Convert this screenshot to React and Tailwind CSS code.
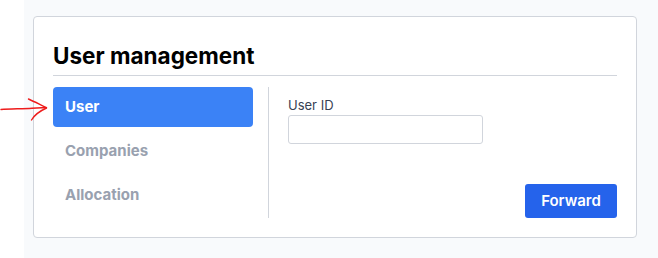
import { useState } from "react";

const tabs = ["User", "Companies", "Allocation"];

export default function App() {
  const [active, setActive] = useState("User");
  const [userId, setUserId] = useState("");

  return (
    <main
      className="relative flex min-h-[258px] bg-white"
      style={{ fontFamily: "Inter, 'Liberation Sans', sans-serif" }}
    >
      {/* hand drawn annotation arrow */}
      <svg
        className="absolute left-0 top-[95px]"
        width="50"
        height="28"
        viewBox="0 0 50 28"
        fill="none"
        stroke="#ee1c1c"
        strokeWidth="1.4"
        strokeLinecap="round"
      >
        <path d="M1 14.5 C 10 13.5, 22 14, 32 13.2 S 42 12.8, 46 12.8" />
        <path d="M28.5 4 C 34 6.5, 40 9.5, 46.5 12.6" />
        <path d="M46.5 13 C 41 15.5, 35 19, 31.5 25" />
      </svg>

      <div className="ml-6 flex-1 bg-[#f8fafc] pl-[9px] pt-4">
        <div className="w-[604px] rounded-[4px] border border-gray-300 bg-white px-[19px] pb-[19px] pt-[25px]">
          <h1 className="border-b border-gray-300 pb-[5px] text-[22.5px] font-bold leading-7 text-black">
            User management
          </h1>

          <div className="mt-[11px] flex h-[131px]">
            <nav className="flex w-[216px] flex-col gap-1 border-r border-gray-300 pr-[15px]">
              {tabs.map((t) => (
                <button
                  key={t}
                  onClick={() => setActive(t)}
                  className={
                    active === t
                      ? "h-10 rounded-[4px] bg-[#3b82f6] px-3 text-left text-[15px] font-bold text-white"
                      : "h-10 rounded-[4px] px-3 text-left text-[15px] font-bold text-gray-400"
                  }
                >
                  {t}
                </button>
              ))}
            </nav>

            <div className="flex flex-1 flex-col pl-[19px]">
              <label className="mt-[10px] text-[13px] leading-4 text-gray-700">
                User ID
              </label>
              <input
                type="text"
                className="mt-[2px] h-[29px] w-[195px] rounded-[3px] border border-gray-300 px-2 text-sm focus:outline-none"
                value={userId}
                onChange={(e) => setUserId(e.target.value)}
              />
              <button className="mt-auto h-[34px] w-[92px] self-end rounded-[3px] bg-[#2563eb] text-[15px] font-semibold text-white">
                Forward
              </button>
            </div>
          </div>
        </div>
      </div>
    </main>
  );
}
